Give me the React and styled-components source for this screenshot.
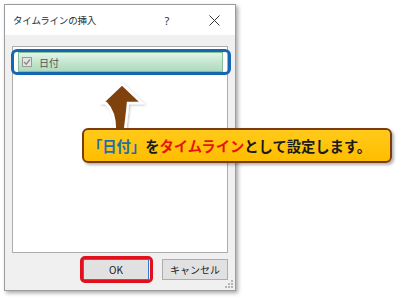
import React from "react";
import styled, { createGlobalStyle } from "styled-components";

const Global = createGlobalStyle`
  html, body { margin: 0; padding: 0; background: #ffffff; }
  body { width: 400px; height: 300px; overflow: hidden; font-family: "Noto Sans CJK JP", "Noto Sans", sans-serif; }
`;

const Page = styled.div`
  position: relative;
  width: 400px;
  height: 300px;
  padding: 4px 0 0 4px;
  box-sizing: border-box;
`;

const Dialog = styled.div`
  position: relative;
  width: 232px;
  height: 287px;
  box-sizing: border-box;
  border: 1px solid #9c9c9c;
  background: #f0f0f0;
  box-shadow: 2px 2px 4px rgba(0, 0, 0, 0.35);
  display: flex;
  flex-direction: column;
`;

const TitleBar = styled.div`
  height: 30px;
  background: #ffffff;
  display: flex;
  align-items: center;
  padding: 0 0 0 8px;
  font-size: 9.5px;
  color: #2b2b2b;
`;

const Title = styled.div`
  flex: 1;
  letter-spacing: -0.2px;
`;

const TitleButton = styled.div`
  flex: none;
  width: ${(p) => p.$w}px;
  height: 30px;
  display: flex;
  align-items: center;
  justify-content: center;
  font-family: "Noto Sans", sans-serif;
  font-size: 11px;
  color: #333;
`;

const Body = styled.div`
  flex: 1;
  display: flex;
  flex-direction: column;
  padding: 11px 7px 0 7px;
`;

const List = styled.div`
  height: 207px;
  box-sizing: border-box;
  border: 1px solid #acacac;
  background: #ffffff;
  padding: 5px 4px 0 5px;
`;

const Row = styled.div`
  position: relative;
  height: 20px;
  box-sizing: border-box;
  border: 1px solid #86bf98;
  background: linear-gradient(#e4f4e8, #c8e7d2 45%, #addbbd 100%);
  display: flex;
  align-items: center;
  padding-left: 3px;
  gap: 7px;
  font-size: 10px;
  color: #555;
`;

const Check = styled.div`
  width: 10px;
  height: 10px;
  box-sizing: border-box;
  border: 1px solid #9a9a9a;
  background: #e4e4e4;
  display: flex;
  align-items: center;
  justify-content: center;
`;

const BlueRing = styled.div`
  position: absolute;
  left: -8px;
  right: -9px;
  top: -4px;
  bottom: -4px;
  border: 3px solid #1566b3;
  border-radius: 6px;
  pointer-events: none;
`;

const Footer = styled.div`
  display: flex;
  justify-content: flex-end;
  gap: 13px;
  margin-top: 6px;
`;

const Button = styled.div`
  position: relative;
  width: 66px;
  height: 21px;
  box-sizing: border-box;
  border: 1px solid ${(p) => (p.$primary ? "#2a7ad6" : "#adadad")};
  background: #e1e1e1;
  display: flex;
  align-items: center;
  justify-content: center;
  font-size: 10px;
  color: #222;
`;

const RedRing = styled.div`
  position: absolute;
  left: -4px;
  right: -5px;
  top: -4px;
  bottom: -4px;
  border: 3px solid #e0101c;
  border-radius: 5px;
`;

const Grip = styled.svg`
  position: absolute;
  right: 2px;
  bottom: 2px;
`;

const Arrow = styled.svg`
  position: absolute;
  left: 96px;
  top: 78px;
  overflow: visible;
`;

const Callout = styled.div`
  position: absolute;
  left: 82px;
  top: 128px;
  width: 310px;
  height: 35px;
  box-sizing: border-box;
  border: 2px solid #7a3c0c;
  border-radius: 6px;
  background: linear-gradient(#ffca1a, #ffbd00);
  box-shadow: 2px 2px 3px rgba(0, 0, 0, 0.3);
  display: flex;
  align-items: center;
  padding-left: 4px;
  font-size: 14.3px;
  font-weight: 700;
  color: #1a1a1a;
  white-space: nowrap;
`;

const Tone = styled.span`
  color: ${(p) => p.$c};
`;

export default function App() {
  return (
    <>
      <Global />
      <Page>
        <Dialog>
          <TitleBar>
            <Title>タイムラインの挿入</Title>
            <TitleButton $w={52}>?</TitleButton>
            <TitleButton $w={42}>
              <svg width="11" height="11" viewBox="0 0 11 11">
                <path d="M0.5 0.5 L10.5 10.5 M10.5 0.5 L0.5 10.5" stroke="#333" strokeWidth="1" />
              </svg>
            </TitleButton>
          </TitleBar>
          <Body>
            <List>
              <Row>
                <Check>
                  <svg width="8" height="8" viewBox="0 0 8 8">
                    <path d="M1 4 L3.2 6.2 L7 1.5" fill="none" stroke="#8a8a8a" strokeWidth="1.3" />
                  </svg>
                </Check>
                <span>日付</span>
                <BlueRing />
              </Row>
            </List>
            <Footer>
              <Button $primary>
                OK
                <RedRing />
              </Button>
              <Button>キャンセル</Button>
            </Footer>
          </Body>
          <Grip width="8" height="8" viewBox="0 0 8 8">
            <g fill="#b5b5b5">
              <rect x="6" y="0" width="2" height="2" />
              <rect x="3" y="3" width="2" height="2" />
              <rect x="6" y="3" width="2" height="2" />
              <rect x="0" y="6" width="2" height="2" />
              <rect x="3" y="6" width="2" height="2" />
              <rect x="6" y="6" width="2" height="2" />
            </g>
          </Grip>
        </Dialog>
        <Arrow width="50" height="55" viewBox="0 0 50 55">
          <defs>
            <filter id="sh" x="-20%" y="-20%" width="150%" height="150%">
              <feDropShadow dx="1" dy="1" stdDeviation="1" floodColor="#000" floodOpacity="0.25" />
            </filter>
          </defs>
          <path
            d="M26 6 L46 25 L32 25 C31 36 30 44 29 52 L19 52 C19 40 16 31 10 25 L6 25 Z"
            fill="#7f420f"
            stroke="#ffffff"
            strokeWidth="2.5"
            strokeLinejoin="miter"
            filter="url(#sh)"
          />
        </Arrow>
        <Callout>
          <Tone $c="#1e6db4">「日付」</Tone>を<Tone $c="#e8140c">タイムライン</Tone>として設定します。
        </Callout>
      </Page>
    </>
  );
}
